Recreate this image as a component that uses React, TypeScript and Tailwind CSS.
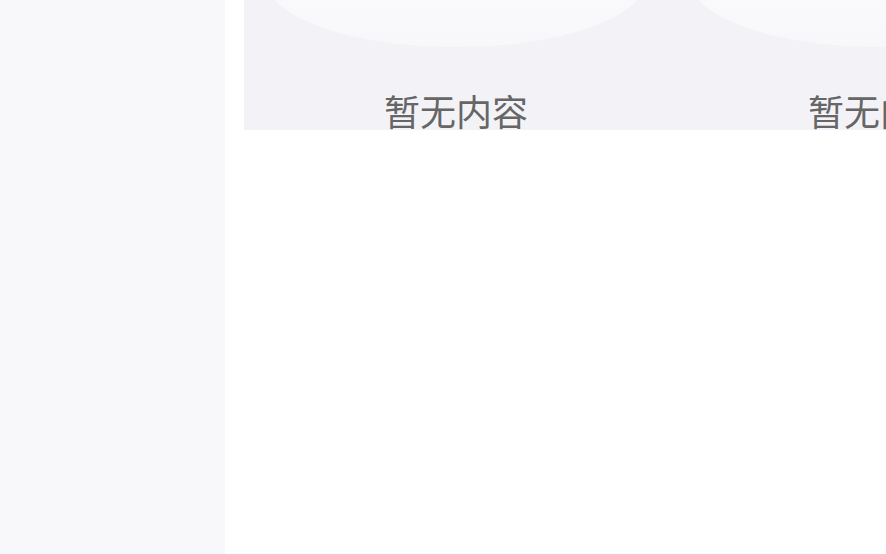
import React from "react";

function EmptyCol() {
  return (
    <div className="w-[424px] shrink-0 flex flex-col items-center">
      <div className="h-[47px] w-full flex justify-center overflow-visible">
        <div className="w-[380px] h-[134px] shrink-0 mt-[-87px] rounded-[50%] bg-gradient-to-b from-[#fcfcfd] to-[#f8f8fa]" />
      </div>
      <div className="mt-[45px] text-[36px] leading-none text-[#666666] font-['Noto_Sans_CJK_SC',sans-serif]">
        暂无内容
      </div>
    </div>
  );
}

export default function App() {
  return (
    <div className="w-[886px] h-[554px] flex bg-white overflow-hidden font-['Noto_Sans_CJK_SC',sans-serif]">
      <div className="w-[225px] shrink-0 h-full bg-[#f8f7fa]" />
      <div className="flex-1 min-w-0 pl-[19px] overflow-hidden">
        <div className="h-[130px] w-[900px] flex bg-[#f3f3f7] overflow-hidden">
          <EmptyCol />
          <EmptyCol />
        </div>
      </div>
    </div>
  );
}
